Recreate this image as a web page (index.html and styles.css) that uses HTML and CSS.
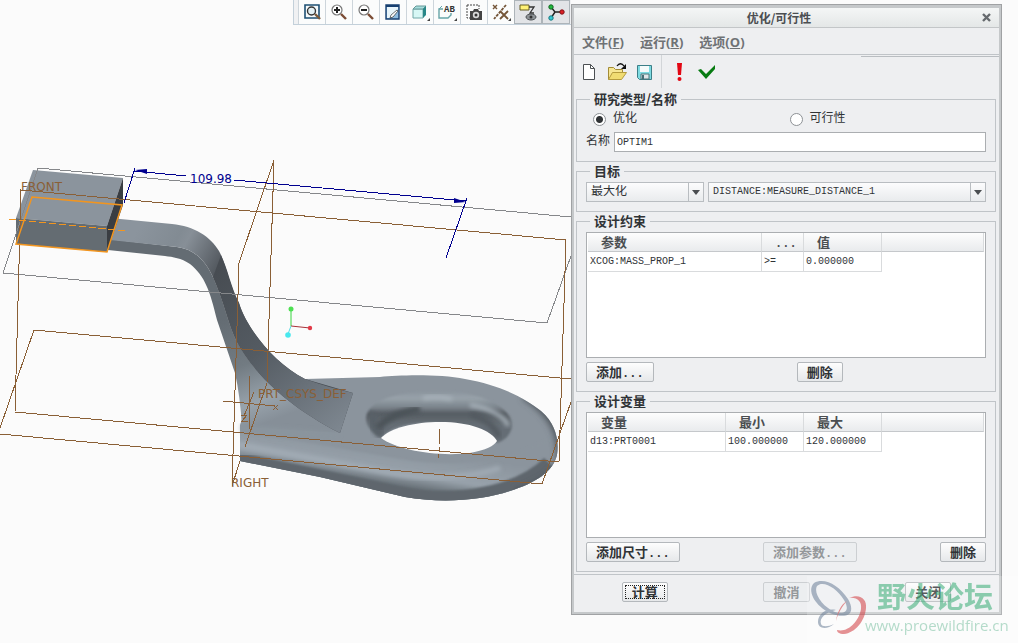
FILE: index.html
```html
<!DOCTYPE html>
<html lang="zh-CN">
<head>
    <meta charset="UTF-8">
    <meta name="viewport" content="width=device-width, initial-scale=1.0">
    <title>优化/可行性</title>
    <link rel="stylesheet" href="styles.css">
</head>
<body>
    <main class="viewport">
        <div class="view-toolbar">
            <button class="view-button" aria-label="Refit">
                <svg width="18" height="18" viewBox="0 0 18 18"><path d="M2 15V2h14v13z" fill="#f4f9fb" stroke="#1d4f73" stroke-width="1.6"/><circle cx="8.500" cy="8" r="4" fill="#e4f1f5" stroke="#333" stroke-width="1.4"/><path d="M12 11l5 5" stroke="#7b5a3a" stroke-width="2.4"/></svg>
            </button>
            <button class="view-button" aria-label="Zoom in">
                <svg width="18" height="18" viewBox="0 0 18 18"><circle cx="7" cy="7" r="5" fill="#fff" stroke="#777" stroke-width="1.2"/><path d="M4 7h6M7 4v6" stroke="#222" stroke-width="2"/><path d="M11 11l5 5" stroke="#7b4c34" stroke-width="2.4"/></svg>
            </button>
            <button class="view-button" aria-label="Zoom out">
                <svg width="18" height="18" viewBox="0 0 18 18"><circle cx="7" cy="7" r="5" fill="#fff" stroke="#777" stroke-width="1.2"/><path d="M4 7h6" stroke="#222" stroke-width="2"/><path d="M11 11l5 5" stroke="#7b4c34" stroke-width="2.4"/></svg>
            </button>
            <button class="view-button" aria-label="Repaint">
                <svg width="18" height="18" viewBox="0 0 18 18"><path d="M2 2h13v14H2z" fill="#8ebce0" stroke="#173f70" stroke-width="1.4"/><path d="M3 4h11v2l-8 9H3z" fill="#e8f5fb"/><path d="M2 2h13v2H2z" fill="#173f70"/><path d="M7 12l6-5 1 1-5 6-3 1z" fill="#fff" stroke="#333" stroke-width=".7"/></svg>
            </button>
            <button class="view-button has-menu" aria-label="Display style">
                <svg width="18" height="18" viewBox="0 0 18 18"><path d="M2 6h10v9H2z" fill="#d7f7f5" stroke="#73a8a8"/><path d="M2 6l3-3h10l-3 3z" fill="#a7dedd" stroke="#659898"/><path d="M12 6l3-3v9l-3 3z" fill="#278787"/></svg>
            </button>
            <button class="view-button has-menu" aria-label="Saved views">
                <svg width="20" height="18" viewBox="0 0 20 18"><path d="M6 6H2v9h9l3-3V10" fill="none" stroke="#67a5a8" stroke-width="1.4"/><path d="M2 6l3-3" stroke="#67a5a8"/><text x="7" y="9" class="icon-label">AB</text></svg>
            </button>
            <button class="view-button" aria-label="View manager">
                <svg width="18" height="18" viewBox="0 0 18 18"><path d="M2 2h12v4M2 2v13h4" fill="none" stroke="#444" stroke-dasharray="2 1"/><path d="M5 8h3l1-2h4l1 2h3v9H5z" fill="#444"/><circle cx="11" cy="12" r="3.2" fill="#d8d8d8"/><circle cx="11" cy="12" r="1.5" fill="#333"/></svg>
            </button>
            <button class="view-button has-menu" aria-label="Datum display">
                <svg width="20" height="18" viewBox="0 0 20 18"><path d="M2 2l4 4M6 2L2 6" stroke="#745538" stroke-width="1.4"/><path d="M15 2L3 16" stroke="#745538" stroke-width="1.8" stroke-dasharray="3 1"/><path d="M9 8l8 8M17 8l-8 8" stroke="#745538" stroke-width="1.8"/></svg>
            </button>
            <button class="view-button pressed" aria-label="Annotation display">
                <svg width="20" height="20" viewBox="0 0 20 20"><path d="M2 3h9v5H2z" fill="#fff275" stroke="#665f25"/><path d="M11 5h5l-4 6h4" fill="none" stroke="#333" stroke-width="1.3"/><ellipse cx="13" cy="15" rx="5" ry="3" fill="#8d9296" stroke="#4d5154"/><circle cx="13" cy="15" r="1.5" fill="#333"/></svg>
            </button>
            <button class="view-button pressed" aria-label="Spin center">
                <svg width="20" height="20" viewBox="0 0 20 20"><path d="M5 5l4 5h7M9 10l-4 6" fill="none" stroke="#222" stroke-width="1.4"/><circle cx="5" cy="5" r="2.2" fill="#20b83c" stroke="#126622"/><circle cx="5" cy="16" r="2.2" fill="#35c8d2" stroke="#147880"/><circle cx="16" cy="10" r="2.2" fill="#db1f26" stroke="#821217"/></svg>
            </button>
        </div>
        <svg class="scene" viewBox="0 25 571 618" role="img" aria-label="PRT0001">
            <defs>
                <linearGradient id="armTop" gradientUnits="userSpaceOnUse" x1="140" y1="225" x2="226" y2="272">
                    <stop offset="0" stop-color="#8b949d"/>
                    <stop offset=".4" stop-color="#828b93"/>
                    <stop offset=".5" stop-color="#878f97"/>
                    <stop offset="1" stop-color="#474c52"/>
                </linearGradient>
                <linearGradient id="armDrop" gradientUnits="userSpaceOnUse" x1="220" y1="265" x2="350" y2="420">
                    <stop offset="0" stop-color="#474c52"/>
                    <stop offset=".45" stop-color="#545b62"/>
                    <stop offset="1" stop-color="#7d868f"/>
                </linearGradient>
                <linearGradient id="armSide" gradientUnits="userSpaceOnUse" x1="220" y1="320" x2="260" y2="425">
                    <stop offset="0" stop-color="#646c73"/>
                    <stop offset=".45" stop-color="#727b82"/>
                    <stop offset=".8" stop-color="#98a3ac"/>
                    <stop offset="1" stop-color="#868f98"/>
                </linearGradient>
                <linearGradient id="baseEdge" gradientUnits="userSpaceOnUse" x1="390" y1="445" x2="382" y2="497">
                    <stop offset="0" stop-color="#8b949d"/>
                    <stop offset=".5" stop-color="#98a2ab"/>
                    <stop offset=".72" stop-color="#6c757c"/>
                    <stop offset="1" stop-color="#596067"/>
                </linearGradient>
                <linearGradient id="eyeRim" gradientUnits="userSpaceOnUse" x1="0" y1="391" x2="0" y2="424">
                    <stop offset="0" stop-color="#8b949d"/>
                    <stop offset=".22" stop-color="#98a2aa"/>
                    <stop offset=".5" stop-color="#7a838b"/>
                    <stop offset=".68" stop-color="#565d63"/>
                    <stop offset="1" stop-color="#656d74"/>
                </linearGradient>
                <filter id="soft1"><feGaussianBlur stdDeviation="1.2"/></filter>
                <filter id="soft2"><feGaussianBlur stdDeviation="2"/></filter>
                <filter id="soft3"><feGaussianBlur stdDeviation="3"/></filter>
                <clipPath id="baseClip">
                    <path d="M240 425L258 372L305 379L380 377C400 375 440 374 465 379C500 385 525 398 541 411C556 424 559 440 557 455C553 472 535 483 510 491C480 501 440 503 405 497L320 477L240 461Z"/>
                </clipPath>
            </defs>

            <!-- base plate with the eye -->
            <g clip-path="url(#baseClip)">
                <path d="M225 365H571V510H225z" fill="#8b949d"/>
                <path d="M236 430L400 459C450 468 500 463 535 445L571 430V520H236z" fill="url(#baseEdge)" filter="url(#soft1)"/>
                <path d="M236 459L400 493C460 506 520 491 549 463" fill="none" stroke="#5e666d" stroke-width="14" filter="url(#soft1)"/>
                <path d="M236 444L390 473C430 480 470 478 500 468" fill="none" stroke="#a2acb5" stroke-width="5" filter="url(#soft2)"/>
                <path d="M525 394C549 410 564 428 562 461C555 478 542 486 515 495" fill="none" stroke="#4e555b" stroke-width="10" filter="url(#soft3)"/>
            </g>
            <path d="M366 418C367 400 400 391 437 391C482 391 513 408 512 426C511 435 504 441 497 443C480 420 400 414 381 438C373 433 366 427 366 418Z" fill="url(#eyeRim)" filter="url(#soft1)"/>
            <path d="M372 412C371 421 375 429 382 435" fill="none" stroke="#596168" stroke-width="9" filter="url(#soft2)"/>
            <path d="M378 428C386 418 400 412 420 409" fill="none" stroke="#4c5359" stroke-width="7" filter="url(#soft2)"/>
            <path d="M423 398C434 396 444 397 452 399M470 405C491 408 506 418 508 426" fill="none" stroke="#a9b3bb" stroke-width="4" filter="url(#soft2)"/>
            <path d="M470 414C488 420 496 429 499 437" fill="none" stroke="#535a61" stroke-width="6" filter="url(#soft2)"/>
            <path d="M381 438C390 428 415 422 440 422C470 422 491 430 497 441C494 446 486 450 470 453C437 457 397 450 381 438Z" fill="#fbfbfb"/>

            <!-- arm -->
            <path d="M108 239L177 247C194 249 205 260 213 277C224 301 228 324 237 342C252 370 283 402 340 433L242 427Q240 395 235 373L217 320C210 291 205 276 190 264C181 258 173 257 165 256L108 250Z" fill="url(#armSide)"/>
            <path d="M241 425L340 433L334 441L242 433Z" fill="#8a949d" filter="url(#soft2)"/>
            <path d="M110 218L172 224C194 226 211 237 219 251C228 268 230 285 239 303C245 325 272 362 305 379L353 393L340 433C283 404 252 370 237 342C228 324 224 301 213 277C205 260 194 249 177 247L110 240Z" fill="url(#armTop)"/>
            <path d="M221 255C229 275 230 286 239 303C247 329 275 364 305 379Q330 388 353 393L340 433C283 404 252 370 237 342C228 324 224 301 213 277Z" fill="url(#armDrop)"/>

            <!-- block -->
            <path d="M33 170L123 178L107 226L16 218Z" fill="#8b949d"/>
            <path d="M16 218L107 226V252L16 244Z" fill="#646c72"/>
            <path d="M123 178V205L107 252V226Z" fill="#393d42"/>

            <!-- datum planes -->
            <g class="plane-far">
                <path d="M571 217L38 168L3 273L547 323L571 256"/>
            </g>
            <g class="plane">
                <path d="M21 190L566 240L559 462L15 412Z"/>
                <path d="M571 379L34 330L0 428M0 434L542 484L571 402"/>
                <path d="M245 447L267 383L274 160L239 263L232 486L240 461"/>
                <path d="M439 429V444M439 447V451M438 454V458"/>
                <path d="M223 401L275 406M250 376L249 430M254 392L244 416M273 405l5 5M278 405l-5 5M241 415h6l-5 6h6"/>
            </g>
            <path class="sketch" d="M32 197L122 205L107 252L16 244Z"/>
            <path class="sketch-axis" d="M9 219L128 231"/>
            <g class="plane-name">
                <text x="21" y="191">FRONT</text>
                <text x="231" y="487">RIGHT</text>
                <text x="258" y="398">PRT_CSYS_DEF</text>
            </g>

            <!-- dimension -->
            <path class="dimension" d="M124 203L135 168M134 171L186 176M234 180L466 201M467 198L446 258"/>
            <path d="M135 170L147 169V174ZM466 202L454 198V203Z" fill="#00008f"/>
            <text x="190" y="183" class="dimension-value">109.98</text>

            <!-- spin center -->
            <path d="M291 326V309" stroke="#38d43e"/>
            <path d="M291 326L310 328" stroke="#a83238"/>
            <path d="M291 326L288 334" stroke="#55dce4"/>
            <circle cx="291" cy="309" r="2.5" fill="#4de052"/>
            <circle cx="310" cy="328" r="2.2" fill="#e23b48"/>
            <circle cx="288" cy="335" r="2.8" fill="#48e8ee"/>
        </svg>
    </main>

    <section class="dialog" aria-labelledby="dialogTitle">
        <header class="title-bar">
            <h1 id="dialogTitle">优化/可行性</h1>
            <button class="close-button" aria-label="关闭窗口">
                <svg width="9" height="9" viewBox="0 0 9 9"><path d="M1 1l7 7M8 1L1 8" stroke="#666a6e" stroke-width="2.4"/></svg>
            </button>
        </header>
        <nav class="menu-bar">
            <button>文件(<u>F</u>)</button>
            <button>运行(<u>R</u>)</button>
            <button>选项(<u>O</u>)</button>
        </nav>
        <div class="tools">
            <div class="tool-group">
                <button aria-label="新建">
                    <svg width="20" height="20" viewBox="0 0 20 20"><path d="M4.500 2.500h7l4 4v11h-11z" fill="#fff" stroke="#4c5053"/><path d="M11.500 2.500v4h4" fill="none" stroke="#4c5053"/></svg>
                </button>
                <button aria-label="打开">
                    <svg width="20" height="20" viewBox="0 0 20 20"><path d="M1.500 17.500v-12h5l2 2h7v4" fill="#f6e693" stroke="#a38b35"/><path d="M1.500 17.500l4-7h14l-5 7z" fill="#f0dc72" stroke="#b59c3e"/><path d="M10 4c2-3 5-3 7 0" fill="none" stroke="#111" stroke-width="1.3"/><path d="M19 2v5h-5z" fill="#111"/></svg>
                </button>
                <button aria-label="保存">
                    <svg width="20" height="20" viewBox="0 0 20 20"><path d="M2.500 3.500h14v14h-12l-2-2z" fill="#7edbe2" stroke="#3c7f88"/><path d="M5 4h9v6H5z" fill="#f5fbfb"/><path d="M6 12h8v5H6z" fill="#dfe5e8" stroke="#4f767b"/><path d="M7 13h2v4H7z" fill="#456f76"/></svg>
                </button>
            </div>
            <div class="tool-group">
                <button aria-label="运行">
                    <svg width="20" height="20" viewBox="0 0 20 20"><path d="M7 1h5l-1 12H8z" fill="#e30613"/><circle cx="9.500" cy="17" r="2" fill="#e30613"/></svg>
                </button>
                <button aria-label="确定">
                    <svg width="20" height="20" viewBox="0 0 20 20"><path d="M0 8l3-1 5 5L17 3v4L8 17z" fill="#077b12"/></svg>
                </button>
            </div>
            <span class="tool-edge"></span>
        </div>

        <form class="study">
            <fieldset>
                <legend>研究类型/名称</legend>
                <div class="radio-row">
                    <label><input type="radio" name="study" checked>优化</label>
                    <label><input type="radio" name="study">可行性</label>
                </div>
                <div class="name-row">
                    <label for="studyName">名称</label>
                    <input type="text" id="studyName" value="OPTIM1">
                </div>
            </fieldset>

            <fieldset>
                <legend>目标</legend>
                <div class="goal-row">
                    <span class="drop-down">
                        <select aria-label="目标类型">
                            <option>最大化</option>
                        </select>
                    </span>
                    <span class="drop-down">
                        <select aria-label="目标参数">
                            <option>DISTANCE:MEASURE_DISTANCE_1</option>
                        </select>
                    </span>
                </div>
            </fieldset>

            <fieldset>
                <legend>设计约束</legend>
                <div class="list-box">
                    <table>
                        <colgroup><col class="col-param"><col class="col-op"><col class="col-value"><col></colgroup>
                        <thead>
                            <tr><th>参数</th><th><span class="dots">...</span></th><th>值</th><th></th></tr>
                        </thead>
                        <tbody>
                            <tr><td>XCOG:MASS_PROP_1</td><td>&gt;=</td><td>0.000000</td></tr>
                        </tbody>
                    </table>
                </div>
                <div class="button-row">
                    <button type="button" class="push">添加<span class="dots">...</span></button>
                    <button type="button" class="push middle">删除</button>
                </div>
            </fieldset>

            <fieldset>
                <legend>设计变量</legend>
                <div class="list-box">
                    <table>
                        <colgroup><col class="col-variable"><col class="col-value"><col class="col-value"><col></colgroup>
                        <thead>
                            <tr><th>变量</th><th>最小</th><th>最大</th><th></th></tr>
                        </thead>
                        <tbody>
                            <tr><td>d13:PRT0001</td><td>100.000000</td><td>120.000000</td></tr>
                        </tbody>
                    </table>
                </div>
                <div class="button-row">
                    <button type="button" class="push">添加尺寸<span class="dots">...</span></button>
                    <button type="button" class="push" disabled>添加参数<span class="dots">...</span></button>
                    <button type="button" class="push">删除</button>
                </div>
            </fieldset>
        </form>

        <footer class="actions">
            <button class="push default">计算</button>
            <button class="push" disabled>撤消</button>
            <button class="push">关闭</button>
        </footer>
    </section>

    <div class="watermark">
        <svg width="60" height="60" viewBox="0 0 60 60">
            <path fill-rule="evenodd" d="M5 3C15-3 30 5 39 19C47 33 39 38 27 35C10 31-4 12 5 3ZM8 6C4 13 14 27 26 32C37 35 41 30 35 20C28 8 14 0 8 6Z" fill="#8293a8"/>
            <path d="M27 30C17 32 10 38 12 44C13 47 19 47 25 44C18 50 9 49 9 42C9 34 17 28 27 30Z" fill="#8293a8"/>
            <path d="M40 18C51 13 58 19 57 28C56 41 46 53 35 54C30 54 28 52 28 50C39 53 50 41 52 29C53 21 48 17 40 18Z" fill="#d9595d"/>
            <path d="M38 21C34 25 29 33 27 41C28 33 32 24 38 21Z" fill="#d9595d"/>
        </svg>
        <div class="watermark-text">
            <strong>野火论坛</strong>
            <span>www.proewildfire.cn</span>
        </div>
    </div>
</body>
</html>
```
FILE: styles.css
```css
* {
    box-sizing: border-box;
}

body {
    position: relative;
    display: grid;
    grid-template-columns: minmax(0, 1fr) 431px;
    align-items: start;
    min-height: 100vh;
    margin: 0;
    padding-right: 16px;
    background: #fbfbfb;
    color: #303336;
    font-family: "Liberation Mono", "Noto Sans CJK SC", monospace;
    font-size: 12px;
    line-height: 14px;
}

button, input, select {
    margin: 0;
    padding: 0;
    border: 0;
    background: none;
    color: inherit;
    font: inherit;
}

/* model view */

.view-toolbar {
    display: flex;
    width: 278px;
    height: 25px;
    margin-left: auto;
    padding: 0 1px 0 4px;
    border-left: 1px solid #c3d0da;
    border-bottom: 1px solid #c3d0da;
    background: #f0f1f3;
}

.view-button {
    position: relative;
    display: flex;
    flex: 1;
    align-items: center;
    justify-content: center;
    height: 24px;
    border-left: 1px solid #cdd5db;
    background: #fbfcfc;
}

.view-button.has-menu::after {
    content: "";
    position: absolute;
    right: 3px;
    bottom: 3px;
    border-left: 3px solid transparent;
    border-bottom: 3px solid #444;
}

.view-button.pressed {
    border: 1px solid #adb4b9;
    background: #e2e4e7;
}

.icon-label {
    font: 700 9px "Liberation Mono", monospace;
    fill: #333;
}

.scene {
    display: block;
    width: 100%;
    fill: none;
}

.plane path {
    stroke: #8a5f36;
    shape-rendering: crispEdges;
}

.plane-far path {
    stroke: #85878a;
    shape-rendering: crispEdges;
}

.plane-name {
    fill: #8a5f36;
    font: 12px "DejaVu Sans", sans-serif;
}

.sketch {
    stroke: #f2951f;
    stroke-width: 1.5;
}

.sketch-axis {
    stroke: #f2951f;
    stroke-dasharray: 7 3;
    shape-rendering: crispEdges;
}

.dimension {
    stroke: #00008f;
    shape-rendering: crispEdges;
}

.dimension-value {
    fill: #00008f;
    font: 12px "DejaVu Sans", sans-serif;
}

/* dialog */

.dialog {
    margin-top: 4px;
    padding: 3px 2px 2px;
    border: 1px solid #a0a2a4;
    background: #c5c8ca;
}

.title-bar {
    display: flex;
    align-items: center;
    height: 20px;
    padding: 0 8px 0 2px;
    border-bottom: 1px solid #c3c6c8;
    background: linear-gradient(#f4f6f6, #e4e7e7);
}

.title-bar h1 {
    flex: 1;
    margin: 0;
    color: #4b4e51;
    font: 700 12px/18px "Noto Sans CJK SC", sans-serif;
    text-align: center;
}

.close-button {
    display: flex;
}

.menu-bar {
    display: flex;
    gap: 16px;
    height: 27px;
    padding: 0 8px;
    border-bottom: 1px solid #c0c4c8;
    background: #eeeff1;
}

.menu-bar button {
    color: #6f7275;
    font: 700 13px "Open Sans", "Noto Sans CJK SC", sans-serif;
}

.tools {
    display: flex;
    height: 37px;
    background: #eeeff1;
}

.tool-group {
    display: flex;
    gap: 8px;
    height: 33px;
    padding: 0 6px 0 5px;
    align-items: center;
}

.tool-group + .tool-group {
    border-left: 1px solid #d2d5d8;
    padding-left: 8px;
}

.tool-group button {
    display: flex;
}

.tool-edge {
    flex: 0 1 138px;
    height: 2px;
    margin-left: auto;
    border-bottom: 1px solid #b9bdc1;
}

.study {
    display: grid;
    gap: 2px;
    padding: 0 3px 2px 2px;
    background: #eeeff1;
}

fieldset {
    min-width: 0;
    margin: 0;
    padding: 4px 9px 9px;
    border: 1px solid #c0c4c8;
}

legend {
    margin-left: 4px;
    padding: 0 4px;
    font: 700 13px/14px "Noto Sans CJK SC", sans-serif;
}

.radio-row {
    display: grid;
    grid-template-columns: 1fr 1fr;
    height: 18px;
    padding-left: 7px;
}

.radio-row label {
    display: flex;
    align-items: center;
    gap: 7px;
}

input[type="radio"] {
    appearance: none;
    width: 13px;
    height: 13px;
    border: 1px solid #8d9195;
    border-radius: 50%;
    background: #fff;
}

input[type="radio"]:checked {
    background: radial-gradient(circle, #303336 0 3px, #fff 4px);
}

.name-row {
    display: flex;
    align-items: center;
    gap: 4px;
    margin-top: 4px;
}

input[type="text"] {
    flex: 1;
    height: 20px;
    padding: 0 2px;
    border: 1px solid #abaeb1;
    background: #fff;
    font-size: 10px;
}

.goal-row {
    display: grid;
    grid-template-columns: 118px 1fr;
    gap: 4px;
}

.drop-down {
    display: grid;
    align-items: center;
    height: 20px;
    border: 1px solid #b9bdc1;
    background: linear-gradient(#fcfcfd, #e9ebed);
}

.drop-down select {
    grid-area: 1 / 1;
    width: 100%;
    height: 18px;
    padding: 0 4px;
    appearance: none;
    font-size: 10px;
}

.drop-down:first-child select {
    font-size: 12px;
}

.drop-down::before {
    content: "";
    grid-area: 1 / 1;
    justify-self: end;
    width: 14px;
    height: 18px;
    border-left: 1px solid #b9bdc1;
}

.drop-down::after {
    content: "";
    grid-area: 1 / 1;
    justify-self: end;
    margin-right: 3px;
    border: 4px solid transparent;
    border-top: 5px solid #4b4e51;
    border-bottom: 0;
    pointer-events: none;
}

.list-box {
    height: 126px;
    padding: 0 1px;
    overflow: hidden;
    border: 1px solid #abaeb1;
    background: #fff;
}

table {
    width: 100%;
    border-spacing: 0;
    table-layout: fixed;
}

.col-param {
    width: 174px;
}

.col-op {
    width: 42px;
}

.col-variable {
    width: 138px;
}

.col-value {
    width: 78px;
}

th, td {
    padding: 0 2px;
    border-right: 1px solid #d9dbdd;
    text-align: left;
    white-space: nowrap;
}

th {
    height: 19px;
    padding-left: 13px;
    border-bottom: 1px solid #c5c8cb;
    background: linear-gradient(#fdfdfd, #e9ebed);
    color: #4b4e51;
    font: 700 13px/16px "Noto Sans CJK SC", sans-serif;
}

td {
    height: 20px;
    border-bottom: 1px solid #d9dbdd;
    font-size: 10px;
}

.button-row {
    display: flex;
    justify-content: space-between;
    margin-top: 4px;
}

.push {
    height: 20px;
    padding: 0 9px;
    border: 1px solid #b4b8bc;
    border-radius: 2px;
    background: linear-gradient(#fdfdfd, #e6e8ea);
    font: 700 13px/16px "Noto Sans CJK SC", sans-serif;
    white-space: nowrap;
}

.push.middle {
    margin: 0 auto;
}

.push:disabled {
    border-color: #cccfd2;
    background: #eceef0;
    color: #94979a;
}

.push.default {
    outline: 1px dotted #222;
    outline-offset: -4px;
}

.dots {
    font: 700 12px "Liberation Mono", monospace;
}

.actions {
    display: grid;
    grid-template-columns: repeat(3, 1fr);
    justify-items: center;
    padding: 7px 0 10px;
    border-top: 1px solid #c0c4c8;
    background: #eeeff1;
}

/* forum mark over the lower right corner */

.watermark {
    position: absolute;
    right: 0;
    bottom: 0;
    display: flex;
    width: 211px;
    height: 67px;
    padding: 4px 8px 0 2px;
    background: rgba(255, 255, 255, 0.3);
    opacity: 0.65;
    pointer-events: none;
}

.watermark svg {
    flex: none;
}

.watermark-text {
    display: flex;
    flex-direction: column;
    margin-left: -4px;
    font-family: "Open Sans", "Noto Sans CJK SC", sans-serif;
}

.watermark strong {
    margin-left: 12px;
    color: #55b98a;
    font-size: 29px;
    line-height: 34px;
}

.watermark span {
    color: #8fcab0;
    font-size: 15px;
    line-height: 22px;
}
```
